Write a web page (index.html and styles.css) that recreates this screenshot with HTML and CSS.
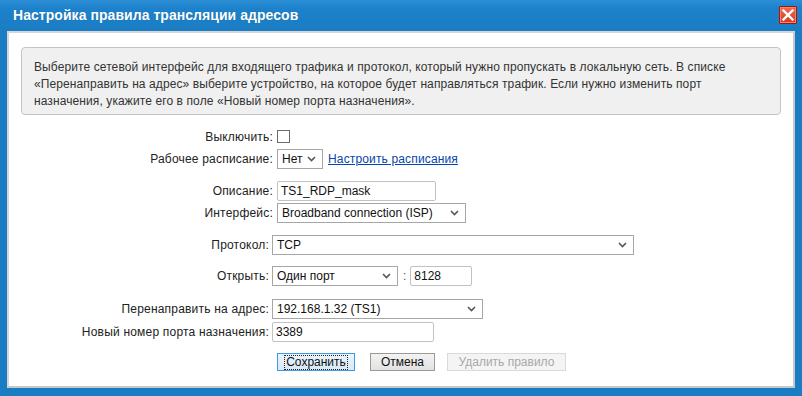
FILE: index.html
```html
<!DOCTYPE html>
<html lang="ru">
<head>
<meta charset="utf-8">
<title>Настройка правила трансляции адресов</title>
<link rel="stylesheet" href="styles.css">
</head>
<body>
<div class="window">
  <div class="titlebar">
    <span class="title">Настройка правила трансляции адресов</span>
    <span class="close">
      <svg width="14" height="12" viewBox="0 0 14 12"><path d="M2.5 1.5 L11.5 10.5 M11.5 1.5 L2.5 10.5" stroke="#fff" stroke-width="2.4" stroke-linecap="square"/></svg>
    </span>
  </div>
  <div class="content">
    <div class="info">Выберите сетевой интерфейс для входящего трафика и протокол, который нужно пропускать в локальную сеть. В списке «Перенаправить на адрес» выберите устройство, на которое будет направляться трафик. Если нужно изменить порт назначения, укажите его в поле «Новый номер порта назначения».</div>

    <div class="group g1">
      <label class="lbl">Выключить:</label>
      <div class="field"><span class="checkbox"></span></div>
      <label class="lbl">Рабочее расписание:</label>
      <div class="field">
        <span class="select w46"><span class="val">Нет</span><svg class="arrow" width="9" height="6" viewBox="0 0 9 6"><path d="M1 1 L4.5 4.5 L8 1" fill="none" stroke="#555" stroke-width="1.6"/></svg></span>
        <a class="link" href="#">Настроить расписания</a>
      </div>
    </div>

    <div class="group g2">
      <label class="lbl">Описание:</label>
      <div class="field"><span class="input w159">TS1_RDP_mask</span></div>
      <label class="lbl">Интерфейс:</label>
      <div class="field"><span class="select w189"><span class="val">Broadband connection (ISP)</span><svg class="arrow" width="9" height="6" viewBox="0 0 9 6"><path d="M1 1 L4.5 4.5 L8 1" fill="none" stroke="#555" stroke-width="1.6"/></svg></span></div>
    </div>

    <div class="group g3">
      <label class="lbl">Протокол:</label>
      <div class="field"><span class="select w362"><span class="val">TCP</span><svg class="arrow" width="9" height="6" viewBox="0 0 9 6"><path d="M1 1 L4.5 4.5 L8 1" fill="none" stroke="#555" stroke-width="1.6"/></svg></span></div>
    </div>

    <div class="group g4">
      <label class="lbl">Открыть:</label>
      <div class="field">
        <span class="select w126"><span class="val">Один порт</span><svg class="arrow" width="9" height="6" viewBox="0 0 9 6"><path d="M1 1 L4.5 4.5 L8 1" fill="none" stroke="#555" stroke-width="1.6"/></svg></span>
        <span class="colon">:</span>
        <span class="input w62">8128</span>
      </div>
    </div>

    <div class="group g5">
      <label class="lbl">Перенаправить на адрес:</label>
      <div class="field"><span class="select w211"><span class="val">192.168.1.32 (TS1)</span><svg class="arrow" width="9" height="6" viewBox="0 0 9 6"><path d="M1 1 L4.5 4.5 L8 1" fill="none" stroke="#555" stroke-width="1.6"/></svg></span></div>
      <label class="lbl">Новый номер порта назначения:</label>
      <div class="field"><span class="input w162">3389</span></div>
    </div>

    <div class="buttons">
      <button class="btn save"><span class="focus">Сохранить</span></button>
      <button class="btn cancel">Отмена</button>
      <button class="btn disabled" disabled>Удалить правило</button>
    </div>
  </div>
</div>
</body>
</html>
```

FILE: styles.css
```css
html, body {
  margin: 0;
  padding: 0;
}
body {
  width: 802px;
  height: 396px;
  overflow: hidden;
  font-family: "Liberation Sans", Arial, sans-serif;
  font-size: 12px;
  color: #222;
}
.window {
  width: 802px;
  height: 396px;
  box-sizing: border-box;
  background: #1a7dc4;
  padding: 0 7px 8px 7px;
  display: flex;
  flex-direction: column;
}
.titlebar {
  height: 31px;
  flex: none;
  margin: 0 -7px;
  padding: 0 5px 0 13px;
  display: flex;
  align-items: center;
  justify-content: space-between;
  background: linear-gradient(#2c8fd6 0px, #1d82cc 8px, #1a7dc4 31px);
}
.title {
  color: #fff;
  font-weight: bold;
  font-size: 14px;
  letter-spacing: 0.05px;
  margin-top: -1px;
  text-shadow: 0 0 1px rgba(0,0,0,0.25);
}
.close {
  width: 18px;
  height: 18px;
  box-sizing: border-box;
  border: 1px solid #a8120c;
  box-shadow: inset 0 0 0 1px #f2876f;
  background: linear-gradient(#f26a50, #d8361f);
  display: flex;
  align-items: center;
  justify-content: center;
  margin-top: -2px;
  border-radius: 1px;
}
.content {
  flex: 1;
  background: #fff;
  border-top: 2px solid #d6d6d6;
  border-left: 2px solid #d6d6d6;
  border-right: 2px solid #c8c8c8;
  border-bottom: 2px solid #c8c8c8;
  padding: 14px 12px 0 12px;
  position: relative;
}
.info {
  background: #f0f0f0;
  border: 1px solid #c4c4c4;
  border-radius: 4px;
  padding: 11px 12px 4px 12px;
  line-height: 17px;
  letter-spacing: 0.1px;
  color: #333;
  height: 51px;
}
.group {
  display: grid;
  align-items: center;
}
.g1 { grid-template-columns: 252px auto; column-gap: 4px; row-gap: 5px; margin-top: 14px; }
.g2 { grid-template-columns: 252px auto; column-gap: 4px; row-gap: 2px; margin-top: 12px; }
.g3 { grid-template-columns: 248px auto; column-gap: 3px; margin-top: 12px; }
.g4 { grid-template-columns: 248px auto; column-gap: 3px; margin-top: 11px; }
.g5 { grid-template-columns: 248px auto; column-gap: 3px; row-gap: 3px; margin-top: 13px; }
.lbl {
  text-align: right;
  color: #222;
  letter-spacing: 0.2px;
}
.field {
  display: flex;
  align-items: center;
}
.checkbox {
  display: block;
  width: 13px;
  height: 13px;
  box-sizing: border-box;
  border: 1px solid #6b6b6b;
  background: #fff;
  margin: 1px 0;
}
.select, .input {
  box-sizing: border-box;
  height: 20px;
  border: 1px solid #a6a6a6;
  background: #fff;
  display: flex;
  align-items: center;
  color: #111;
}
.select {
  justify-content: space-between;
  padding: 0 6px 0 4px;
}
.input {
  padding: 0 3px;
  border-color: #c2c2c2;
  border-radius: 2px;
}
.arrow { flex: none; }
.w46 { width: 46px; }
.w159 { width: 159px; }
.w189 { width: 189px; }
.w362 { width: 362px; }
.w126 { width: 126px; }
.w62 { width: 62px; }
.w211 { width: 211px; }
.w162 { width: 162px; }
.link {
  color: #0645ad;
  text-decoration: underline;
  margin-left: 5px;
  letter-spacing: 0.15px;
}
.colon {
  margin: 0 4px 0 5px;
  color: #555;
}
.buttons {
  display: flex;
  margin-top: 11px;
  margin-left: 256px;
}
.btn {
  font-family: "Liberation Sans", Arial, sans-serif;
  font-size: 12px;
  height: 18px;
  padding: 0;
  box-sizing: border-box;
  background: linear-gradient(#f3f3f3, #e2e2e2);
  border: 1px solid #9a9a9a;
  color: #111;
  display: flex;
  align-items: center;
  justify-content: center;
}
.save {
  width: 78px;
  border-color: #3c9be6;
  background: linear-gradient(#eaf4fc, #d7e9f7);
}
.focus {
  outline: 1px dotted #222;
  padding: 0 1px;
  line-height: 13px;
}
.cancel {
  width: 65px;
  margin-left: 15px;
}
.disabled {
  width: 119px;
  margin-left: 12px;
  color: #a8a8a8;
  background: #f4f4f4;
  border-color: #dadada;
}
```
